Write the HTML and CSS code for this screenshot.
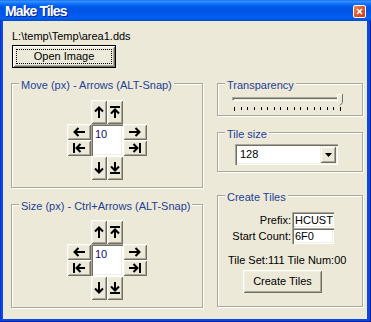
FILE: index.html
```html
<!DOCTYPE html>
<html>
<head>
<meta charset="utf-8">
<title>Make Tiles</title>
<link rel="stylesheet" href="styles.css">
</head>
<body>
<svg class="defs" width="0" height="0" aria-hidden="true">
  <symbol id="i-up" viewBox="0 0 10 12"><path d="M5 12V1.5M1 5.5L5 1.5L9 5.5"/></symbol>
  <symbol id="i-top" viewBox="0 0 10 12"><path d="M0 1H10M5 12V3.5M1 7.5L5 3.5L9 7.5"/></symbol>
  <symbol id="i-down" viewBox="0 0 10 12"><path d="M5 0V10.5M1 6.5L5 10.5L9 6.5"/></symbol>
  <symbol id="i-bottom" viewBox="0 0 10 12"><path d="M0 11H10M5 0V8.5M1 4.5L5 8.5L9 4.5"/></symbol>
  <symbol id="i-left" viewBox="0 0 12 10"><path d="M12 5H1.5M5.5 1L1.5 5L5.5 9"/></symbol>
  <symbol id="i-home" viewBox="0 0 12 10"><path d="M1 0V10M12 5H3.5M7.5 1L3.5 5L7.5 9"/></symbol>
  <symbol id="i-right" viewBox="0 0 12 10"><path d="M0 5H10.5M6.5 1L10.5 5L6.5 9"/></symbol>
  <symbol id="i-end" viewBox="0 0 12 10"><path d="M11 0V10M0 5H8.5M4.5 1L8.5 5L4.5 9"/></symbol>
</svg>

<div class="window">
  <div class="titlebar">
    <span class="title">Make Tiles</span>
    <span class="close"><svg viewBox="0 0 11 11" width="11" height="11"><path d="M2.5 2.5L8.5 8.5M8.5 2.5L2.5 8.5"/></svg></span>
  </div>

  <div class="client">
    <div class="path">L:\temp\Temp\area1.dds</div>
    <button class="btn btn-default"><span class="focus">Open Image</span></button>

    <div class="columns">
      <div class="col col-left">
        <div class="group g-move">
          <div class="group-title">Move (px) - Arrows (ALT-Snap)</div>
          <div class="dpad">
            <button class="kbtn k-up"><svg class="iv"><use href="#i-up"/></svg></button>
            <button class="kbtn k-top"><svg class="iv"><use href="#i-top"/></svg></button>
            <button class="kbtn k-left"><svg class="ih"><use href="#i-left"/></svg></button>
            <div class="num">10</div>
            <button class="kbtn k-right"><svg class="ih"><use href="#i-right"/></svg></button>
            <button class="kbtn k-home"><svg class="ih"><use href="#i-home"/></svg></button>
            <button class="kbtn k-end"><svg class="ih"><use href="#i-end"/></svg></button>
            <button class="kbtn k-down"><svg class="iv"><use href="#i-down"/></svg></button>
            <button class="kbtn k-bottom"><svg class="iv"><use href="#i-bottom"/></svg></button>
          </div>
        </div>

        <div class="group g-size">
          <div class="group-title">Size (px) - Ctrl+Arrows (ALT-Snap)</div>
          <div class="dpad">
            <button class="kbtn k-up"><svg class="iv"><use href="#i-up"/></svg></button>
            <button class="kbtn k-top"><svg class="iv"><use href="#i-top"/></svg></button>
            <button class="kbtn k-left"><svg class="ih"><use href="#i-left"/></svg></button>
            <div class="num">10</div>
            <button class="kbtn k-right"><svg class="ih"><use href="#i-right"/></svg></button>
            <button class="kbtn k-home"><svg class="ih"><use href="#i-home"/></svg></button>
            <button class="kbtn k-end"><svg class="ih"><use href="#i-end"/></svg></button>
            <button class="kbtn k-down"><svg class="iv"><use href="#i-down"/></svg></button>
            <button class="kbtn k-bottom"><svg class="iv"><use href="#i-bottom"/></svg></button>
          </div>
        </div>
      </div>

      <div class="col col-right">
        <div class="group g-trans">
          <div class="group-title">Transparency</div>
          <div class="slider">
            <div class="track"></div>
            <svg class="thumb" width="6" height="12" viewBox="0 0 6 12">
              <path d="M0.5 0.5H5.5V8.5L3 11.5L0.5 8.5Z" fill="#ECE9D8"/>
              <path d="M0.5 8.5V0.5H5" stroke="#fff" fill="none"/>
              <path d="M5.5 0V8.5L3 11.5" stroke="#716F64" fill="none"/>
            </svg>
            <div class="ticks">
              <i class="long"></i><i></i><i></i><i></i><i></i><i></i><i></i><i></i><i></i><i></i><i></i><i></i><i></i><i></i><i></i><i></i><i class="long"></i>
            </div>
          </div>
        </div>

        <div class="group g-tile">
          <div class="group-title">Tile size</div>
          <div class="combo">
            <span class="combo-text">128</span>
            <span class="combo-btn"><svg width="7" height="4" viewBox="0 0 7 4"><path d="M0 0H7L3.5 4Z"/></svg></span>
          </div>
        </div>

        <div class="group g-create">
          <div class="group-title">Create Tiles</div>
          <div class="form">
            <label class="flabel">Prefix:</label>
            <div class="field">HCUST</div>
            <label class="flabel">Start Count:</label>
            <div class="field">6F0</div>
          </div>
          <div class="status">Tile Set:111 Tile Num:00</div>
          <button class="btn btn-create">Create Tiles</button>
        </div>
      </div>
    </div>
  </div>
</div>
</body>
</html>
```

FILE: styles.css
```css
* { box-sizing: border-box; }
html, body { margin: 0; padding: 0; }
body {
  width: 371px;
  height: 322px;
  overflow: hidden;
  background: #ffffff;
  font: 11px/13px "Liberation Sans", Arial, sans-serif;
  color: #000;
}
.defs { position: absolute; width: 0; height: 0; }

.window {
  width: 371px;
  height: 322px;
  display: flex;
  flex-direction: column;
  background: #0b4ae2;
  box-shadow: inset 1px 0 #0831d9, inset -1px 0 #001ea0, inset 0 -1px #001ea0;
}

.titlebar {
  height: 21px;
  flex: none;
  display: flex;
  align-items: flex-start;
  justify-content: space-between;
  padding: 2px 5px 0 5px;
  background: linear-gradient(#0a5ef6 0, #3d95ff 1px, #2b8aff 2px, #0c6ff9 4px, #0058e6 7px, #0055e3 10px, #0058ec 14px, #0160f3 17px, #005be9 19px, #0049c5 21px);
}
.title {
  color: #fff;
  font: bold 14px/19px "Liberation Sans", Arial, sans-serif;
  letter-spacing: -0.9px;
  text-shadow: 1px 1px #0a1e8a;
}
.close {
  margin-top: 3px;
  width: 13px;
  height: 13px;
  border: 1px solid #fff;
  border-radius: 2px;
  background: linear-gradient(135deg, #f08a63 0%, #e3582f 45%, #c9401c 100%);
  display: flex;
  align-items: center;
  justify-content: center;
}
.close svg { width: 9px; height: 9px; stroke: #fff; stroke-width: 2; fill: none; }

.client {
  flex: 1;
  margin: 0 4px 3px 3px;
  background: #ece9d8;
  padding: 9px 4px 0 8px;
}

.path { padding-left: 1px; height: 13px; }

.btn {
  font: 11px/13px "Liberation Sans", Arial, sans-serif;
  color: #000;
  background: #ece9d8;
  border: 0;
  padding: 0;
  display: flex;
  align-items: center;
  justify-content: center;
  box-shadow: inset 1px 1px #fff, inset -1px -1px #716f64, inset 2px 2px #f1efe2, inset -2px -2px #aca899;
}
.btn-default {
  margin: 2px 0 0 1px;
  width: 104px;
  height: 23px;
  border: 1px solid #000;
  padding: 3px;
}
.btn-default .focus {
  flex: 1;
  align-self: stretch;
  display: flex;
  align-items: center;
  justify-content: center;
  border: 1px dotted #000;
}

.columns {
  display: flex;
  gap: 14px;
  margin-top: 15px;
}
.col { display: flex; flex-direction: column; }
.col-left { width: 192px; }
.col-right { width: 146px; }

.group {
  position: relative;
  border: 1px solid #aca899;
  box-shadow: inset 1px 1px #fff, 1px 1px #fff;
}
.group-title {
  position: absolute;
  top: -5px;
  left: 7px;
  padding: 0 2px;
  background: #ece9d8;
  color: #1e3f95;
  white-space: nowrap;
}

.g-move { height: 105px; padding-top: 16px; }
.g-size { height: 104px; margin-top: 16px; padding-top: 15px; }

.dpad {
  display: grid;
  grid-template-columns: 24px 16px 16px 24px;
  grid-template-rows: 24px 16px 16px 24px;
  grid-template-areas:
    ". up top ."
    "left num num right"
    "home num num end"
    ". down bot .";
  justify-content: center;
}
.kbtn {
  border: 0;
  padding: 0;
  background: #ece9d8;
  display: flex;
  align-items: center;
  justify-content: center;
  box-shadow: inset 1px 1px #fff, inset -1px -1px #716f64, inset 2px 2px #f1efe2, inset -2px -2px #aca899;
}
.kbtn svg { fill: none; stroke: #000; stroke-width: 2; }
.iv { width: 10px; height: 12px; }
.ih { width: 12px; height: 10px; }
.k-up { grid-area: up; }
.k-top { grid-area: top; }
.k-left { grid-area: left; }
.k-home { grid-area: home; }
.k-right { grid-area: right; }
.k-end { grid-area: end; }
.k-down { grid-area: down; }
.k-bottom { grid-area: bot; }
.num {
  grid-area: num;
  background: #fff;
  color: #10106a;
  padding: 4px 0 0 4px;
  box-shadow: inset 1px 1px #aca899, inset 2px 2px #716f64, inset -1px -1px #fff, inset -2px -2px #f1efe2;
}

.g-trans { height: 33px; padding: 13px 19px 0 14px; }
.slider { position: relative; }
.track {
  height: 4px;
  border: 1px solid;
  border-color: #aca899 #fff #fff #aca899;
  box-shadow: inset 1px 1px #716f64;
  background: #ece9d8;
}
.thumb { position: absolute; right: 0; top: -3px; }
.ticks {
  display: flex;
  justify-content: space-between;
  align-items: flex-start;
  margin: 6px 2px 0 2px;
}
.ticks i { width: 1px; height: 3px; background: #000; }
.ticks i.long { height: 4px; }

.g-tile { height: 40px; margin-top: 16px; padding: 11px 0 0 17px; }
.combo {
  width: 103px;
  height: 21px;
  background: #fff;
  display: flex;
  align-items: center;
  justify-content: space-between;
  padding: 2px;
  box-shadow: inset 1px 1px #aca899, inset 2px 2px #716f64, inset -1px -1px #fff, inset -2px -2px #f1efe2;
}
.combo-text { padding-left: 3px; }
.combo-btn {
  width: 16px;
  height: 17px;
  background: #ece9d8;
  display: flex;
  align-items: center;
  justify-content: center;
  box-shadow: inset 1px 1px #f1efe2, inset -1px -1px #716f64, inset 2px 2px #fff, inset -2px -2px #aca899;
}
.combo-btn svg { fill: #000; }

.g-create { height: 112px; margin-top: 23px; padding: 16px 0 0 0; }
.form {
  display: grid;
  grid-template-columns: auto 42px;
  grid-auto-rows: 16px;
  column-gap: 1px;
  justify-content: end;
  padding-right: 28px;
}
.flabel { text-align: right; align-self: center; }
.field {
  background: #fff;
  padding: 2px 0 0 3px;
  box-shadow: inset 1px 1px #aca899, inset 2px 2px #716f64, inset -1px -1px #fff, inset -2px -2px #f1efe2;
}
.status { margin: 10px 0 0 10px; }
.btn-create {
  margin: 3px 0 0 25px;
  width: 79px;
  height: 23px;
}
```
